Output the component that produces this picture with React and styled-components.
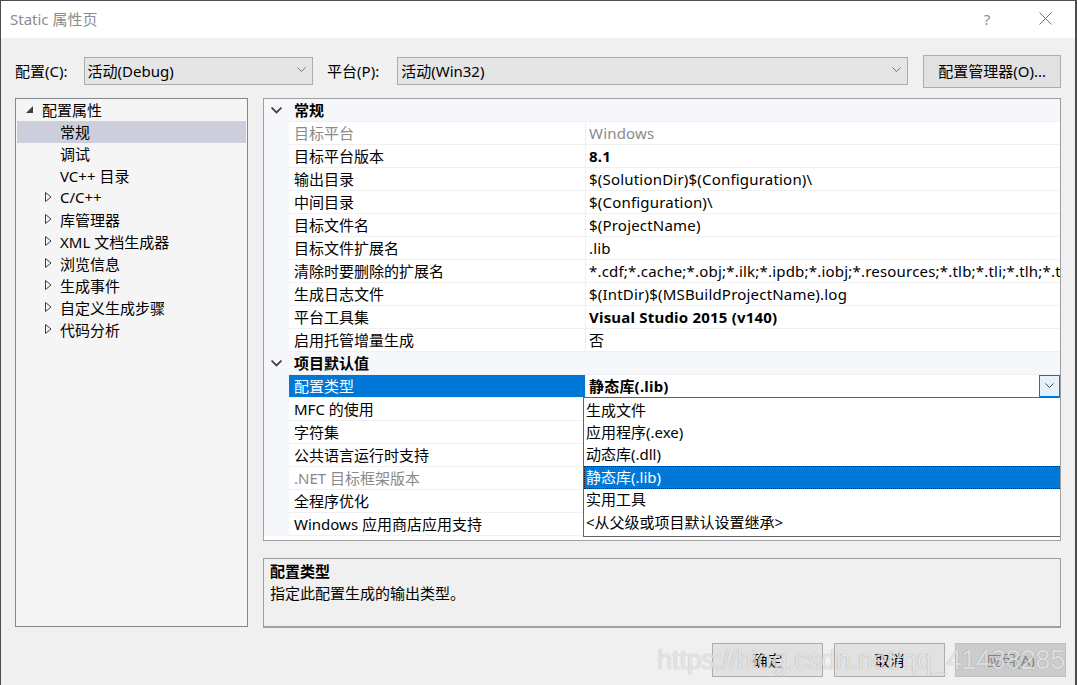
import React from "react";
import styled, { createGlobalStyle } from "styled-components";

const GlobalStyle = createGlobalStyle`
  html, body { margin: 0; padding: 0; background: #f0f0f0; }
  * { box-sizing: border-box; }
`;

const FONT = `"Noto Sans", "Noto Sans CJK SC", sans-serif`;

const Window = styled.div`
  position: relative;
  width: 1077px;
  height: 685px;
  border: 1px solid #4d4d4d;
  border-right-width: 2px;
  border-bottom: none;
  display: flex;
  flex-direction: column;
  font-family: ${FONT};
  font-size: 15px;
  color: #000;
  background: #f0f0f0;
  overflow: hidden;
`;

const TitleBar = styled.div`
  height: 37px;
  background: #fff;
  display: flex;
  align-items: center;
  padding-left: 9px;
  padding-right: 1px;
  padding-bottom: 2px;
  flex-shrink: 0;
`;

const Title = styled.div`
  flex: 1;
  color: #8c8c8c;
  font-size: 15px;
`;

const TitleButton = styled.div`
  width: 58px;
  display: flex;
  justify-content: center;
  align-items: center;
  color: #8c8c8c;
  font-size: 15px;
`;

const Body = styled.div`
  flex: 1;
  display: flex;
  flex-direction: column;
  padding: 17px 9px 0 14px;
`;

const TopRow = styled.div`
  height: 33px;
  display: flex;
  align-items: center;
  margin-right: 5px;
  padding-bottom: 1px;
`;

const Label = styled.div`
  white-space: nowrap;
  margin-right: ${(p) => p.$gap || 0}px;
  padding-bottom: 2px;
`;

const Combo = styled.div`
  width: ${(p) => p.$w}px;
  height: 28px;
  background: #e5e5e5;
  border: 1px solid #acacac;
  display: flex;
  align-items: center;
  padding: 0 6px 2px 3px;
  margin-right: ${(p) => p.$mr || 0}px;
`;

const ComboText = styled.div`
  flex: 1;
  white-space: nowrap;
`;

const Button = styled.div`
  width: ${(p) => p.$w}px;
  height: ${(p) => p.$h || 34}px;
  background: ${(p) => (p.$disabled ? "#cccccc" : "#e1e1e1")};
  border: 1px solid ${(p) => (p.$disabled ? "#bfbfbf" : "#adadad")};
  color: ${(p) => (p.$disabled ? "#838383" : "#000")};
  display: flex;
  align-items: center;
  justify-content: center;
  white-space: nowrap;
  padding-bottom: 2px;
  margin-left: ${(p) => p.$ml || 0}px;
`;

const Main = styled.div`
  display: flex;
  gap: 15px;
  margin-top: 10px;
  height: 530px;
  margin-right: 5px;
`;

const Tree = styled.div`
  width: 233px;
  height: 529px;
  background: #f5f5f5;
  border: 1px solid #828790;
  padding: 0 1px;
`;

const TreeItem = styled.div`
  height: 22px;
  display: flex;
  align-items: center;
  padding-left: ${(p) => p.$indent}px;
  padding-bottom: 2px;
  background: ${(p) => (p.$selected ? "#cccedb" : "transparent")};
  white-space: nowrap;
`;

const TreeArrow = styled.span`
  width: ${(p) => p.$w}px;
  display: inline-flex;
  align-items: center;
  flex-shrink: 0;
`;

const RightCol = styled.div`
  flex: 1;
  display: flex;
  flex-direction: column;
  gap: 17px;
`;

const Grid = styled.div`
  position: relative;
  height: 443px;
  border: 1px solid #a0a0a0;
  background: #fff;
  overflow: hidden;
`;

const Row = styled.div`
  display: grid;
  grid-template-columns: 25px 296px 1fr;
  height: 23px;
`;

const Gutter = styled.div`
  background: #f5f7fa;
  display: flex;
  align-items: center;
  justify-content: center;
`;

const HeaderRow = styled.div`
  display: grid;
  grid-template-columns: 25px 1fr;
  height: 23px;
  background: #f5f7fa;
  border-bottom: 1px solid #f0f0f0;
`;

const HeaderText = styled.div`
  font-weight: bold;
  display: flex;
  align-items: center;
  padding-left: 5px;
  padding-bottom: 2px;
`;

const NameCell = styled.div`
  display: flex;
  align-items: center;
  padding-left: 5px;
  padding-bottom: 1px;
  border-bottom: 1px solid #f0f0f0;
  background: ${(p) => (p.$selected ? "#0078d7" : "#fff")};
  color: ${(p) => (p.$selected ? "#fff" : p.$dim ? "#8a8a8a" : "#000")};
  white-space: nowrap;
`;

const ValueCell = styled.div`
  display: flex;
  align-items: center;
  padding-left: 3px;
  border-left: 1px solid #f0f0f0;
  border-bottom: 1px solid #f0f0f0;
  color: ${(p) => (p.$dim ? "#8a8a8a" : "#000")};
  font-weight: ${(p) => (p.$bold ? "bold" : "normal")};
  white-space: nowrap;
  overflow: hidden;
`;

const ValueText = styled.span`
  flex: 1;
  overflow: hidden;
  padding-bottom: 1px;
  letter-spacing: 0.2px;
`;

const DropButton = styled.div`
  width: 21px;
  height: 22px;
  border: 1px solid #0078d7;
  background: #e5f1fb;
  display: flex;
  align-items: center;
  justify-content: center;
  flex-shrink: 0;
`;

const DropList = styled.div`
  position: absolute;
  left: 319px;
  top: 298px;
  width: 480px;
  height: 140px;
  background: #fff;
  border: 1px solid #646464;
  padding-top: 1px;
`;

const DropItem = styled.div`
  height: 22.4px;
  display: flex;
  align-items: center;
  padding-left: 2px;
  padding-bottom: 2px;
  background: ${(p) => (p.$selected ? "#0078d7" : "transparent")};
  color: ${(p) => (p.$selected ? "#fff" : "#000")};
  outline: ${(p) => (p.$selected ? "1px dotted #222" : "none")};
  outline-offset: -1px;
  white-space: nowrap;
`;

const Desc = styled.div`
  height: 70px;
  border: 1px solid #a0a0a0;
  border-bottom: 2px solid #a0a0a0;
  background: #f0f0f0;
  padding: 0 6px;
  display: flex;
  flex-direction: column;
`;

const DescTitle = styled.div`
  font-weight: bold;
  height: 22px;
  display: flex;
  align-items: center;
`;

const DescText = styled.div`
  height: 23px;
  display: flex;
  align-items: center;
`;

const ButtonRow = styled.div`
  display: flex;
  justify-content: flex-end;
  margin-top: 15px;
`;

const Watermark = styled.div`
  position: absolute;
  right: 10px;
  bottom: 9px;
  font-family: "Liberation Sans", Arial, sans-serif;
  font-size: 27px;
  color: rgba(255, 255, 255, 0.72);
  text-shadow: 0 0 1px rgba(0, 0, 0, 0.35);
  letter-spacing: -0.2px;
  pointer-events: none;
  white-space: nowrap;
`;

const Chevron = ({ size = 10, color = "#555", sw = 1.2 }) => (
  <svg width={size} height={size * 0.6} viewBox="0 0 10 6">
    <polyline points="0.5,0.5 5,5 9.5,0.5" fill="none" stroke={color} strokeWidth={sw} />
  </svg>
);

const ExpandedTri = () => (
  <svg width="7" height="7" viewBox="0 0 7 7">
    <polygon points="7,0 7,7 0,7" fill="#404040" />
  </svg>
);

const CollapsedTri = () => (
  <svg width="7" height="10" viewBox="0 0 7 10">
    <polygon points="0.5,0.5 6,5 0.5,9.5" fill="none" stroke="#404040" strokeWidth="1" />
  </svg>
);

const CloseIcon = () => (
  <svg width="13" height="13" viewBox="0 0 13 13">
    <line x1="0.5" y1="0.5" x2="12.5" y2="12.5" stroke="#6e6e6e" strokeWidth="1" />
    <line x1="12.5" y1="0.5" x2="0.5" y2="12.5" stroke="#6e6e6e" strokeWidth="1" />
  </svg>
);

const treeItems = [
  { label: "配置属性", level: 0, tri: "exp" },
  { label: "常规", level: 1, selected: true },
  { label: "调试", level: 1 },
  { label: "VC++ 目录", level: 1 },
  { label: "C/C++", level: 1, tri: "col" },
  { label: "库管理器", level: 1, tri: "col" },
  { label: "XML 文档生成器", level: 1, tri: "col" },
  { label: "浏览信息", level: 1, tri: "col" },
  { label: "生成事件", level: 1, tri: "col" },
  { label: "自定义生成步骤", level: 1, tri: "col" },
  { label: "代码分析", level: 1, tri: "col" },
];

const general = [
  { name: "目标平台", value: "Windows", dim: true },
  { name: "目标平台版本", value: "8.1", bold: true },
  { name: "输出目录", value: "$(SolutionDir)$(Configuration)\\" },
  { name: "中间目录", value: "$(Configuration)\\" },
  { name: "目标文件名", value: "$(ProjectName)" },
  { name: "目标文件扩展名", value: ".lib" },
  {
    name: "清除时要删除的扩展名",
    value: "*.cdf;*.cache;*.obj;*.ilk;*.ipdb;*.iobj;*.resources;*.tlb;*.tli;*.tlh;*.tmp;*.rsp;*.pgc;*.pgd;*.meta",
  },
  { name: "生成日志文件", value: "$(IntDir)$(MSBuildProjectName).log" },
  { name: "平台工具集", value: "Visual Studio 2015 (v140)", bold: true },
  { name: "启用托管增量生成", value: "否" },
];

const defaults = [
  { name: "配置类型", value: "静态库(.lib)", bold: true, selected: true },
  { name: "MFC 的使用", value: "" },
  { name: "字符集", value: "" },
  { name: "公共语言运行时支持", value: "" },
  { name: ".NET 目标框架版本", value: "", dim: true },
  { name: "全程序优化", value: "" },
  { name: "Windows 应用商店应用支持", value: "" },
];

const options = ["生成文件", "应用程序(.exe)", "动态库(.dll)", "静态库(.lib)", "实用工具", "<从父级或项目默认设置继承>"];

const PropRow = ({ p }) => (
  <Row>
    <Gutter />
    <NameCell $selected={p.selected} $dim={p.dim}>{p.name}</NameCell>
    <ValueCell $dim={p.dim} $bold={p.bold}>
      <ValueText>{p.value}</ValueText>
      {p.selected && (
        <DropButton>
          <Chevron size={9} color="#333" sw={1} />
        </DropButton>
      )}
    </ValueCell>
  </Row>
);

const Section = ({ title }) => (
  <HeaderRow>
    <Gutter>
      <Chevron size={11} color="#444" sw={1.6} />
    </Gutter>
    <HeaderText>{title}</HeaderText>
  </HeaderRow>
);

export default function App() {
  return (
    <>
      <GlobalStyle />
      <Window>
        <TitleBar>
          <Title>Static 属性页</Title>
          <TitleButton>?</TitleButton>
          <TitleButton>
            <CloseIcon />
          </TitleButton>
        </TitleBar>
        <Body>
          <TopRow>
            <Label $gap={16}>配置(C):</Label>
            <Combo $w={230} $mr={14}>
              <ComboText>活动(Debug)</ComboText>
              <Chevron size={9} color="#666" sw={1} />
            </Combo>
            <Label $gap={18}>平台(P):</Label>
            <Combo $w={512} $mr={15}>
              <ComboText>活动(Win32)</ComboText>
              <Chevron size={9} color="#666" sw={1} />
            </Combo>
            <Button $w={138} $h={33}>配置管理器(O)...</Button>
          </TopRow>
          <Main>
            <Tree>
              {treeItems.map((t) => (
                <TreeItem key={t.label} $indent={t.level === 0 ? 9 : 28} $selected={t.selected}>
                  <TreeArrow $w={t.level === 0 ? 16 : 15}>
                    {t.tri === "exp" && <ExpandedTri />}
                    {t.tri === "col" && <CollapsedTri />}
                  </TreeArrow>
                  {t.label}
                </TreeItem>
              ))}
            </Tree>
            <RightCol>
              <Grid>
                <Section title="常规" />
                {general.map((p) => (
                  <PropRow key={p.name} p={p} />
                ))}
                <Section title="项目默认值" />
                {defaults.map((p) => (
                  <PropRow key={p.name} p={p} />
                ))}
                <DropList>
                  {options.map((o) => (
                    <DropItem key={o} $selected={o === "静态库(.lib)"}>
                      {o}
                    </DropItem>
                  ))}
                </DropList>
              </Grid>
              <Desc>
                <DescTitle>配置类型</DescTitle>
                <DescText>指定此配置生成的输出类型。</DescText>
              </Desc>
            </RightCol>
          </Main>
          <ButtonRow>
            <Button $w={111}>确定</Button>
            <Button $w={111} $ml={11}>取消</Button>
            <Button $w={111} $ml={10} $disabled>应用(A)</Button>
          </ButtonRow>
        </Body>
        <Watermark>https://blog.csdn.net/qq_41438285</Watermark>
      </Window>
    </>
  );
}
